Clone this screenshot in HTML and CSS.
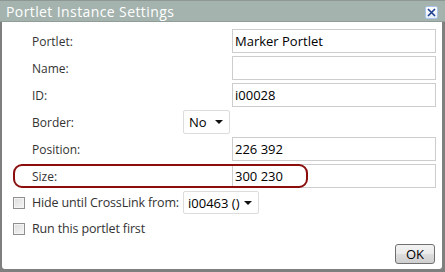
FILE: index.html
```html
<!DOCTYPE html>
<html lang="en">
<head>
  <meta charset="UTF-8" />
  <title>Portlet Instance Settings</title>
  <link rel="stylesheet" href="styles.css">
</head>
<body>

  <div class="dialog">
    <!-- Title bar -->
    <div class="titlebar">
      <span class="title">Portlet Instance Settings</span>
      <button class="close" title="Close">
        <svg width="9" height="9" viewBox="0 0 9 9"><path d="M1 1 L8 8 M8 1 L1 8" stroke="#1d3f8f" stroke-width="1.6" fill="none"/></svg>
      </button>
    </div>

    <!-- Settings -->
    <div class="content">
      <div class="field"><label>Portlet:</label><input class="text" value="Marker Portlet" readonly></div>
      <div class="field"><label>Name:</label><input class="text" value="" readonly></div>
      <div class="field"><label>ID:</label><input class="text" value="i00028" readonly></div>
      <div class="field"><label class="short">Border:</label><div class="select"><span>No</span><i class="caret"></i></div></div>
      <div class="field"><label>Position:</label><input class="text" value="226 392" readonly></div>
      <div class="field size"><label>Size:</label><input class="text" value="300 230" readonly><span class="highlight"></span></div>

      <div class="check-row">
        <span class="checkbox"></span>
        <label class="check-label">Hide until CrossLink from:</label>
        <div class="select wide"><span>i00463 ()</span><i class="caret"></i></div>
      </div>
      <div class="check-row">
        <span class="checkbox"></span>
        <label class="check-label">Run this portlet first</label>
      </div>

      <div class="actions"><button class="ok">OK</button></div>
    </div>
  </div>

</body>
</html>
```

FILE: styles.css
```css
* { box-sizing: border-box; margin: 0; padding: 0; }
body {
  font-family: 'Open Sans', 'Liberation Sans', sans-serif;
  font-size: 12px;
  color: #333;
  background: #fff;
}
.dialog {
  width: 445px; height: 272px;
  display: flex; flex-direction: column;
  background: #7f7f7f;
  padding: 0 3px 3px 2px;
  border-top: 1px solid #8d9894;
}
.titlebar {
  height: 21px;
  background: #a4b3ae;
  display: flex; align-items: center;
  justify-content: space-between;
  margin: 0 -3px 0 -2px;
  padding: 0 7px 0 6px;
  border-bottom: 1px solid #8f9c98;
}
.title {
  color: #fff;
  font-size: 14px;
  letter-spacing: 0.4px;
}
.close {
  width: 13px; height: 13px;
  margin-top: 2px;
  border: 1px solid #a9c6ea;
  border-radius: 2px;
  background: linear-gradient(#ffffff, #e6eefa);
  display: flex; align-items: center; justify-content: center;
  cursor: pointer;
}
.content {
  flex: 1;
  background: #fff;
  border-radius: 0 0 3px 3px;
  padding: 7px 6px 0 11px;
  display: flex; flex-direction: column;
  gap: 3px;
}
.field {
  display: flex; align-items: center;
  height: 24px;
  padding-left: 19px;
  position: relative;
}
.field label {
  width: 200px;
}
.field label.short {
  width: 151px;
}
.text {
  width: 204px; height: 24px;
  border: 1px solid #cdcdcd;
  padding: 0 2px;
  font-family: inherit;
  font-size: 13px;
  color: #000;
  outline: none;
}
.select {
  height: 24px; width: 47px;
  border: 1px solid #dcdcdc;
  border-radius: 2px;
  display: flex; align-items: center; justify-content: space-between;
  padding: 0 6px 0 5px;
  font-size: 13px;
  color: #000;
}
.select.wide {
  width: 76px; height: 23px;
  padding-left: 4px;
}
.caret {
  width: 0; height: 0;
  border-left: 4px solid transparent;
  border-right: 4px solid transparent;
  border-top: 4px solid #111;
}
.highlight {
  position: absolute;
  left: 0; top: 0;
  width: 295px; height: 24px;
  border: 2px solid #8c0d0d;
  border-radius: 9px;
  pointer-events: none;
}
.check-row {
  display: flex; align-items: center;
  height: 23px;
}
.checkbox {
  width: 12px; height: 12px;
  flex-shrink: 0;
  border: 1px solid #8e8f8f;
  background: linear-gradient(135deg, #dcdcdc, #f6f6f6);
  box-shadow: inset 0 0 0 1px #f4f4f4;
  margin-right: 7px;
}
.check-label {
  font-size: 12.5px;
  letter-spacing: -0.15px;
  width: 151px;
  flex-shrink: 0;
  white-space: nowrap;
}
.check-row:last-of-type .check-label { width: auto; }
.actions {
  display: flex; justify-content: flex-end;
  margin-top: 1px;
}
.ok {
  width: 40px; height: 20px;
  border: 1px solid #707070;
  border-radius: 3px;
  background: linear-gradient(#f2f2f2, #ebebeb 50%, #dddddd 51%, #cfcfcf);
  font-family: inherit;
  font-size: 13px;
  color: #000;
  margin-right: 1px;
}
```
